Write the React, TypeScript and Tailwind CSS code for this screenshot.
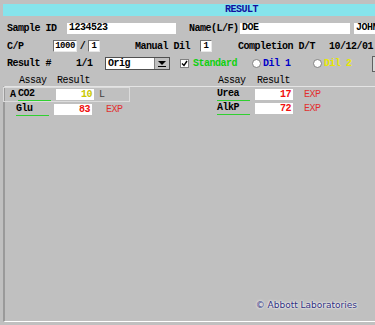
import React from 'react'

const ui = "font-['Liberation_Mono','DejaVu_Sans_Mono',monospace] text-[10px] font-bold tracking-[-0.5px]"
const row = 'flex items-center pl-[7px] whitespace-nowrap [&>*]:shrink-0'

function Field({ w, children, right }: { w: string; children?: React.ReactNode; right?: boolean }) {
  return (
    <div className={`${w} h-[11px] shrink-0 bg-white flex items-center px-[2px] leading-none ${right ? 'justify-end' : ''}`}>
      {children}
    </div>
  )
}

function Sunken({ w, children }: { w: string; children?: React.ReactNode }) {
  return (
    <div className={`${w} h-[12px] bg-white border-t border-l border-[#707070] border-r-[#e8e8e8] border-b-[#e8e8e8] border-r border-b flex items-center justify-center leading-none text-[9px]`}>
      {children}
    </div>
  )
}

function Radio() {
  return <div className="w-[9px] h-[9px] rounded-full bg-white border border-[#808080]" />
}

function Row({ flag, name, value, valueColor, note, noteColor, gap }: {
  flag?: string; name: string; value: string; valueColor: string; note: string; noteColor: string; gap: string
}) {
  return (
    <div className="flex items-center h-[13px] [&>*]:shrink-0">
      <span className="w-[12px] pl-[4px]">{flag}</span>
      <div className="w-[38px] h-[13px] flex flex-col justify-between">
        <span className="leading-[11px]">{name}</span>
        <div className="h-[1px] w-[33px] bg-[#30d030]" />
      </div>
      <Field w="w-[38px]" right>
        <span className={valueColor}>{value}</span>
      </Field>
      <span className={`${gap} font-normal ${noteColor}`}>{note}</span>
    </div>
  )
}

export default function App() {
  return (
    <div className={`w-[375px] h-[325px] bg-[#c0c0c0] overflow-hidden text-black ${ui} flex flex-col`}>
      <div className="mt-[4px] ml-[3px] h-[12px] bg-[#86e4ec] flex items-center pl-[222px] text-[#1010a0] leading-none">
        RESULT
      </div>

      <div className={`mt-[6px] h-[12px] ${row}`}>
        <span className="w-[60px]">Sample ID</span>
        <Field w="w-[109px]">1234523</Field>
        <span className="ml-[13px] w-[51px]">Name(L/F)</span>
        <Field w="w-[110px]">DOE</Field>
        <div className="ml-[4px]"><Field w="w-[40px]">JOHN</Field></div>
      </div>

      <div className={`mt-[6px] h-[12px] ${row}`}>
        <span className="w-[46px]">C/P</span>
        <Sunken w="w-[24px]">1000</Sunken>
        <span className="w-[11px] text-center">/</span>
        <Sunken w="w-[12px]">1</Sunken>
        <span className="ml-[35px] w-[65px]">Manual Dil</span>
        <Sunken w="w-[12px]">1</Sunken>
        <span className="ml-[26px] w-[91px]">Completion D/T</span>
        <span>10/12/01</span>
      </div>

      <div className={`mt-[5px] h-[13px] ${row}`}>
        <span className="w-[69px]">Result #</span>
        <span className="w-[29px]">1/1</span>
        <div className="w-[65px] h-[13px] flex border border-[#505050]">
          <div className="flex-1 bg-white flex items-center pl-[2px] leading-none">Orig</div>
          <div className="w-[15px] bg-[#c0c0c0] border-l border-[#808080] flex flex-col items-center justify-center gap-[1px]">
            <div className="w-0 h-0 border-l-[4px] border-r-[4px] border-t-[4px] border-l-transparent border-r-transparent border-t-black" />
            <div className="w-[8px] h-[1px] bg-black" />
          </div>
        </div>
        <div className="ml-[10px] w-[9px] h-[9px] bg-white border border-[#808080] flex items-center justify-center">
          <svg width="7" height="7" viewBox="0 0 7 7"><path d="M1 3.5 L3 5.5 L6 1" stroke="#000" strokeWidth="1.4" fill="none" /></svg>
        </div>
        <span className="ml-[4px] w-[59px] text-[#10d010]">Standard</span>
        <Radio />
        <span className="ml-[2px] w-[50px] text-[#0000c8]">Dil 1</span>
        <Radio />
        <span className="ml-[2px] w-[48px] text-[#e8e800]">Dil 2</span>
        <div className="w-[10px] h-[16px] bg-[#d8d8d8] border border-[#606060]" />
      </div>

      <div className="mt-[5px] h-[10px] flex items-center whitespace-nowrap font-normal [&>*]:shrink-0">
        <span className="ml-[19px] w-[38px]">Assay</span>
        <span className="w-[161px]">Result</span>
        <span className="w-[39px]">Assay</span>
        <span>Result</span>
      </div>

      <div className="mt-[1px] ml-[3px] flex-1 border-t border-t-[#e4e4e4] border-l-2 border-l-[#9a9a9a] mb-[3px] border-b border-b-white flex flex-col">
        <div className="flex">
          <div className="w-[200px] shrink-0 flex flex-col gap-[1px]">
            <div className="w-[127px] border border-[#dcdcdc] -ml-[2px] pl-[2px]">
              <Row flag="A" name="CO2" value="10" valueColor="text-[#c8c800]" note="L" noteColor="text-[#404040]" gap="ml-[5px]" />
            </div>
            <div className="-ml-[1px]">
              <Row name="Glu" value="83" valueColor="text-[#f01010]" note="EXP" noteColor="text-[#e03030]" gap="ml-[14px]" />
            </div>
          </div>
          <div className="flex flex-col gap-[1px] pt-[1px]">
            <Row name="Urea" value="17" valueColor="text-[#f01010]" note="EXP" noteColor="text-[#e03030]" gap="ml-[11px]" />
            <Row name="AlkP" value="72" valueColor="text-[#f01010]" note="EXP" noteColor="text-[#e03030]" gap="ml-[11px]" />
          </div>
        </div>
        <div className="flex-1" />
        <div className="flex justify-end pr-[18px] pb-[9px]">
          <span className="font-['DejaVu_Sans',sans-serif] font-normal tracking-normal text-[9px] text-[#303080] [text-shadow:0_0_2px_#fff,0_0_3px_#fff]">
            © Abbott Laboratories
          </span>
        </div>
      </div>
    </div>
  )
}
